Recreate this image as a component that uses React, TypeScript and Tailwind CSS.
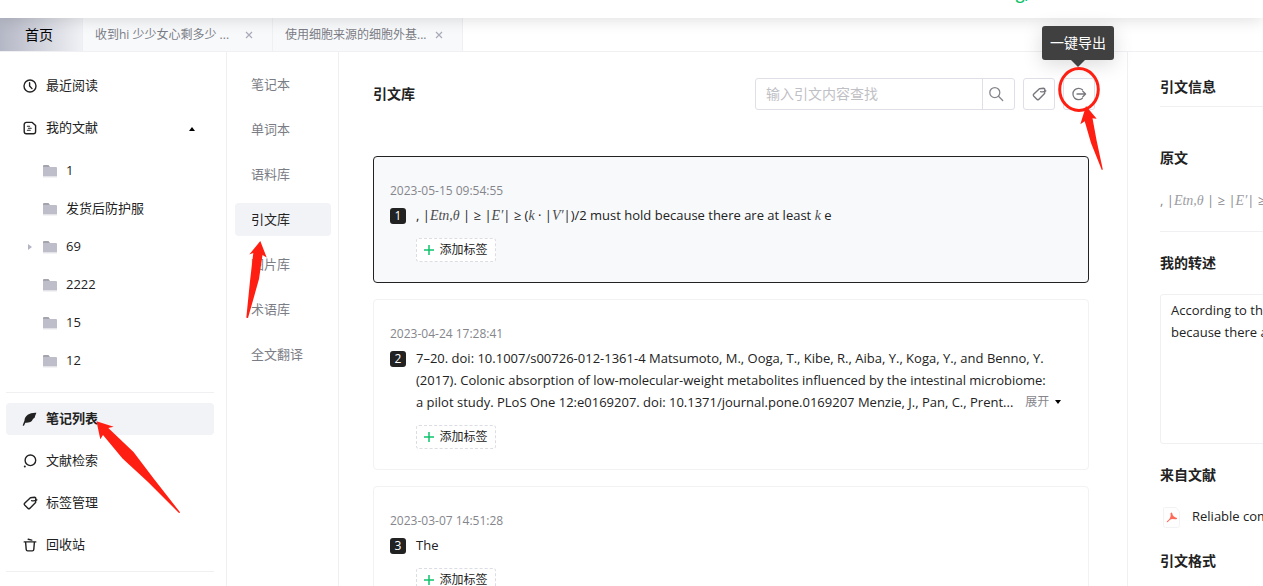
import type { ReactNode } from "react";

const serif = "font-['Liberation_Serif','DejaVu_Serif',serif] text-sm italic opacity-80";

function Icon({ children, className = "size-4" }: { children: ReactNode; className?: string }) {
  return (
    <svg viewBox="0 0 16 16" fill="none" stroke="currentColor" strokeWidth="1.4" strokeLinecap="round" strokeLinejoin="round" className={`shrink-0 ${className}`} aria-hidden="true">
      {children}
    </svg>
  );
}

const ClockIcon = () => (
  <Icon>
    <circle cx="8" cy="8" r="6" />
    <path d="M7.6 4.8V8l2.4 2.6" />
  </Icon>
);
const DocIcon = () => (
  <Icon>
    <path d="M4.4 2.4h5.8l3.4 3.2v6a2.2 2.2 0 0 1-2.2 2.2h-7a2.2 2.2 0 0 1-2.2-2.2v-7a2.2 2.2 0 0 1 2.2-2.2Z" />
    <path d="M5.4 6.2h2.2M6.4 8.2h2.8M5.4 10.2h2.8" strokeWidth="1.1" />
  </Icon>
);
const FeatherIcon = () => (
  <Icon>
    <path d="M14.4 1.8C8 1.4 2.800 4.200 2.500 9.600L.6 14.400l1.300.3 1.500-3C8.600 12.200 10.200 9.900 10.900 8.100L12.600 6.800 13.200 4.800Z" fill="currentColor" stroke="none" />
  </Icon>
);
const RingSearchIcon = () => (
  <Icon>
    <circle cx="8.4" cy="7.3" r="5.3" />
    <path d="M2.8 13.4v.2" strokeWidth="2" />
  </Icon>
);
const TagIcon = () => (
  <Icon>
    <path d="M8.4 2.7 12.6 2.2Q13.6 2.2 13.8 3.2L13.6 7.400 7.700 13.400Q6.900 14.100 6.100 13.400L2.600 9.900Q1.900 9.100 2.600 8.300Z" />
    <path d="M9.6 5.600Q12 6.400 14.800 4.800" />
  </Icon>
);
const TrashIcon = () => (
  <Icon>
    <path d="M2.2 4.900h11.600M6.200 2.300l3.600.8M3.600 5l.6 7.400q.1 1.500 1.500 1.500h4.600q1.400 0 1.500-1.500L12.400 5" />
  </Icon>
);
const ExportIcon = () => (
  <Icon>
    <path d="M11.400 3.700A5.700 5.700 0 1 0 11.400 12.300M6 8h8.600M11.800 5.200 14.600 8l-2.800 2.800" strokeWidth="1.300" />
  </Icon>
);
const SearchIcon = () => (
  <Icon>
    <circle cx="6.8" cy="6.6" r="5" strokeWidth="1.3" />
    <path d="m10.5 10.3 4.2 4.2" strokeWidth="1.3" />
  </Icon>
);
const FolderIcon = () => (
  <svg viewBox="0 0 14 13" className="h-[13px] w-3.5 shrink-0" aria-hidden="true">
    <path d="M0 1Q0 0 1 0h4.500L7 2H0Z" fill="#a3a4ae" />
    <path d="M0 2h13q1 0 1 1v8.500H0Z" fill="#bdbec9" />
    <path d="M0 11.500h14v1H0Z" fill="#e6e6ea" />
  </svg>
);

function NavItem({ icon, label, active, children }: { icon: ReactNode; label: string; active?: boolean; children?: ReactNode }) {
  return (
    <div className="relative">
      <button type="button" className={`flex h-8 w-full items-center gap-2 rounded pl-4 text-left ${active ? "bg-[#f2f3f7] font-bold" : ""}`}>
        {icon}
        {label}
      </button>
      {children}
    </div>
  );
}

function Quote() {
  return (
    <>
      , |<i className={serif}>Etn,θ</i> | ≥ |<i className={serif}>E′</i>| ≥ (<i className={serif}>k</i> · |<i className={serif}>V′</i>|)/2 must hold because there are at least{" "}
      <i className={serif}>k</i> e
    </>
  );
}

function Card({ index, date, active, more, children }: { index: number; date: string; active?: boolean; more?: boolean; children: ReactNode }) {
  return (
    <article className={`rounded border px-4 pt-6 pb-5 ${active ? "border-[#222] bg-[#f8f9fb]" : "border-[#f2f2f4]"}`}>
      <time className="block text-xs leading-5 text-[#85868c]">{date}</time>
      <div className="mt-[3px] flex gap-2.5">
        <span className="mt-1 flex size-4 shrink-0 items-center justify-center rounded-[3px] bg-[#222] text-xs leading-4 text-white">{index}</span>
        <div className="min-w-0 flex-1">
          <div className="text-[13px] leading-[22px]">
            {children}
            {more && (
              <button type="button" className="ml-3 inline-flex h-[22px] items-center gap-1.5 align-top text-xs text-[#85868c]">
                展开
                <svg viewBox="0 0 6 4" className="h-1 w-1.5 fill-black" aria-hidden="true">
                  <path d="M0 0h6L3 4Z" />
                </svg>
              </button>
            )}
          </div>
          <button type="button" className="mt-3 flex h-6 w-20 items-center justify-center gap-[5px] rounded-[3px] border border-dashed border-[#dcdde2] bg-white text-xs">
            <svg viewBox="0 0 10 10" className="size-2.5" stroke="#0fc36d" strokeWidth="1.5" aria-hidden="true">
              <path d="M5 0v10M0 5h10" />
            </svg>
            添加标签
          </button>
        </div>
      </div>
    </article>
  );
}

const folders = ["1", "发货后防护服", "69", "2222", "15", "12"];
const sections = ["笔记本", "单词本", "语料库", "引文库", "图片库", "术语库", "全文翻译"];
const tabs = ["收到hi 少少女心剩多少 ...", "使用细胞来源的细胞外基..."];

export default function App() {
  return (
    <div className="flex h-screen flex-col overflow-hidden bg-white font-['Open_Sans','Noto_Sans_CJK_SC',sans-serif] text-[13px] text-[#222]">
      <header className="relative z-10 h-[18px] shrink-0 bg-white shadow-[0_2px_16px_rgba(0,0,0,0.13)]">
        <div className="flex h-full items-start justify-end overflow-hidden pr-[234px]">
          <span className="-mt-[17px] text-base leading-5 font-semibold text-[#0fc36d]">g,</span>
        </div>
      </header>

      <nav className="flex h-[34px] shrink-0 border-b border-[#f0f0f2]">
        <a href="#home" className="flex w-[83px] items-center border-r border-[#eceef2] bg-linear-to-r from-[#b4b7c5] to-[#f0f1f5] pl-[25px] text-sm text-black">
          首页
        </a>
        {tabs.map((tab) => (
          <div key={tab} className="flex w-[190px] items-center justify-between border-r border-[#eef0f3] bg-[#f8f9fb] pr-[17px] pl-3 text-xs text-[#7b7d85]">
            <a href="#tab" className="whitespace-nowrap">{tab}</a>
            <button type="button" aria-label="关闭" className="text-[#a9abb8]">
              <svg viewBox="0 0 12 12" className="size-3" stroke="currentColor" strokeWidth="1.2" aria-hidden="true">
                <path d="m3 3 6 6M9 3 3 9" />
              </svg>
            </button>
          </div>
        ))}
      </nav>

      <div className="flex min-h-0 flex-1">
        <aside className="relative z-10 flex w-[227px] shrink-0 flex-col border-r border-[#f0f0f2] pt-[18px] pr-3 pl-1.5">
          <div className="flex flex-col gap-2.5">
            <NavItem icon={<ClockIcon />} label="最近阅读" />
            <NavItem icon={<DocIcon />} label="我的文献">
              <svg viewBox="0 0 6 4" className="absolute top-[15px] right-[19px] h-1 w-1.5 fill-black" aria-hidden="true">
                <path d="M0 4h6L3 0Z" />
              </svg>
            </NavItem>
          </div>
          <ul className="mt-2">
            {folders.map((name) => (
              <li key={name} className="flex h-[38px] items-center">
                <span className="flex w-[37px] shrink-0 pl-[22px]">
                  {name === "69" && (
                    <svg viewBox="0 0 4 6" className="h-1.5 w-1 fill-[#b4b5c4]" aria-hidden="true">
                      <path d="M0 0l4 3-4 3Z" />
                    </svg>
                  )}
                </span>
                <FolderIcon />
                <a href="#folder" className="ml-[9px]">{name}</a>
              </li>
            ))}
          </ul>
          <hr className="mt-3 border-[#f0f0f2]" />
          <div className="mt-2.5 flex flex-col gap-2.5">
            <NavItem icon={<FeatherIcon />} label="笔记列表" active>
              <svg viewBox="94 419 90 98" className="pointer-events-none absolute top-4 left-[88px] z-10 h-[98px] w-[90px]" fill="#ff1f12" aria-hidden="true">
                <path d="M96.5 421.3 113.7 426.7 108.3 428 133.5 452 154 479 180.2 512.5 179 513 148 482 122.5 458.5 103 435 100.3 439.3Z" />
              </svg>
            </NavItem>
            <NavItem icon={<RingSearchIcon />} label="文献检索" />
            <NavItem icon={<TagIcon />} label="标签管理" />
            <NavItem icon={<TrashIcon />} label="回收站" />
          </div>
          <hr className="mt-2.5 border-[#f0f0f2]" />
        </aside>

        <nav className="flex w-28 shrink-0 flex-col gap-3 border-r border-[#f0f0f2] pt-4 pr-[7px] pl-2">
          {sections.map((name) => (
            <div key={name} className="relative">
              <a href="#section" className={`flex h-[33px] items-center rounded pl-4 ${name === "引文库" ? "bg-[#f2f3f7]" : "text-[#7b7d85]"}`}>
                {name}
              </a>
              {name === "引文库" && (
                <svg viewBox="245 239 24 82" className="pointer-events-none absolute top-9 left-2.5 z-10 h-[82px] w-6" fill="#ff1f12" aria-hidden="true">
                  <path d="M260.3 241 266.7 257.5 262.5 255 259 279 248 318 246.3 317.7 250 281 253.3 253 249.3 254.5Z" />
                </svg>
              )}
            </div>
          ))}
        </nav>

        <main className="min-w-0 flex-1 pl-[34px]">
          <div className="flex h-[104px] items-start justify-between pt-[26px] pr-8">
            <h1 className="text-sm leading-8 font-bold">引文库</h1>
            <div className="flex gap-2">
              <div className="flex h-8 w-[260px] rounded-[3px] border border-[#dfe0e7]">
                <input type="text" aria-label="输入引文内容查找" placeholder="输入引文内容查找" className="min-w-0 flex-1 px-2.5 text-sm outline-none placeholder:text-[#bfc0c5]" />
                <button type="button" aria-label="查找" className="flex w-8 items-center justify-start border-l border-[#dfe0e7] pl-[5px] text-[#85868c]">
                  <SearchIcon />
                </button>
              </div>
              <button type="button" aria-label="标签" className="flex size-8 items-center justify-center rounded-[3px] border border-[#dfe0e7] text-[#77787e]">
                <TagIcon />
              </button>
              <div className="relative z-20">
                <button type="button" aria-label="一键导出" className="flex size-8 items-center justify-center rounded-[3px] border border-[#dfe0e7] text-[#77787e]">
                  <ExportIcon />
                </button>
                <div role="tooltip" className="absolute right-[-19px] bottom-full mb-[18px] flex h-[34px] w-[72px] items-center justify-center rounded-[3px] bg-[#404040] text-sm whitespace-nowrap text-white shadow-[0_4px_20px_rgba(0,0,0,0.15)]">
                  一键导出
                  <svg viewBox="0 0 14 7" className="absolute top-full h-[7px] w-3.5 fill-[#404040]" aria-hidden="true">
                    <path d="M0 0h14L7 7Z" />
                  </svg>
                </div>
                <svg viewBox="1057 65 50 108" className="pointer-events-none absolute -top-[13px] -left-1.5 h-[108px] w-[50px] max-w-none" aria-hidden="true">
                  <ellipse cx="1079" cy="89.5" rx="19.3" ry="21" fill="none" stroke="#ff1f12" strokeWidth="3" />
                  <path d="M1086 106 1096.7 118.7 1092.5 118.2 1096.5 140 1102.8 169.5 1101.8 170 1091 143 1084.7 121.3 1080.3 124.3Z" fill="#ff1f12" />
                </svg>
              </div>
            </div>
          </div>
          <div className="flex flex-col gap-4 pr-[38px]">
            <Card index={1} date="2023-05-15 09:54:55" active>
              <Quote />
            </Card>
            <Card index={2} date="2023-04-24 17:28:41" more>
              7–20. doi: 10.1007/s00726-012-1361-4 Matsumoto, M., Ooga, T., Kibe, R., Aiba, Y., Koga, Y., and Benno, Y. (2017). Colonic absorption of low-molecular-weight metabolites influenced by the intestinal microbiome: a&nbsp;pilot study. PLoS One 12:e0169207. doi: 10.1371/journal.pone.0169207 Menzie, J., Pan, C., Prent...
            </Card>
            <Card index={3} date="2023-03-07 14:51:28">The</Card>
          </div>
        </main>

        <aside className="w-[136px] shrink-0 overflow-hidden border-l border-[#f0f0f2] pl-8">
          <div className="w-80">
            <h2 className="pt-6 text-sm leading-[22px] font-bold">引文信息</h2>
            <hr className="mt-2 border-[#f0f0f2]" />
            <h2 className="mt-10 text-sm leading-[22px] font-bold">原文</h2>
            <p className="mt-5 overflow-hidden leading-[22px] whitespace-nowrap text-[#85868c]">
              <Quote />
            </p>
            <hr className="mt-5 border-[#f0f0f2]" />
            <h2 className="mt-5 text-sm leading-[22px] font-bold">
              <label htmlFor="restatement">我的转述</label>
            </h2>
            <textarea id="restatement" className="mt-5 block h-[150px] w-full resize-none rounded-[3px] border border-[#f0f0f2] px-2.5 py-1 leading-[22px] outline-none" defaultValue={"According to the definition,\nbecause there are at least"} />
            <h2 className="mt-5 text-sm leading-[22px] font-bold">来自文献</h2>
            <a href="#paper" className="mt-5 flex h-[22px] items-center gap-3 pl-[3px] whitespace-nowrap">
              <svg viewBox="0 0 17 21" className="h-[21px] w-[17px] shrink-0" aria-hidden="true">
                <path d="M1.5.5H13l3.5 4v14q0 2-2 2h-12q-2 0-2-2V2q0-1.500 1-1.500Z" fill="#fefefe" stroke="#f3f3f4" />
                <path d="M8.200 5.500q1.400 0 1.200 1.600.2 2.600 4.600 3.900.3 1.500-1.500 1.200-2-.3-3.500-.3-2.200.4-3.600 2.700-1.400 1.300-1.700.3 0-1 1.800-1.900Q8.300 10 7.500 6.500Z" fill="#ff6a58" />
              </svg>
              Reliable communication
            </a>
            <h2 className="mt-[22px] text-sm leading-[22px] font-bold">引文格式</h2>
          </div>
        </aside>
      </div>
    </div>
  );
}
